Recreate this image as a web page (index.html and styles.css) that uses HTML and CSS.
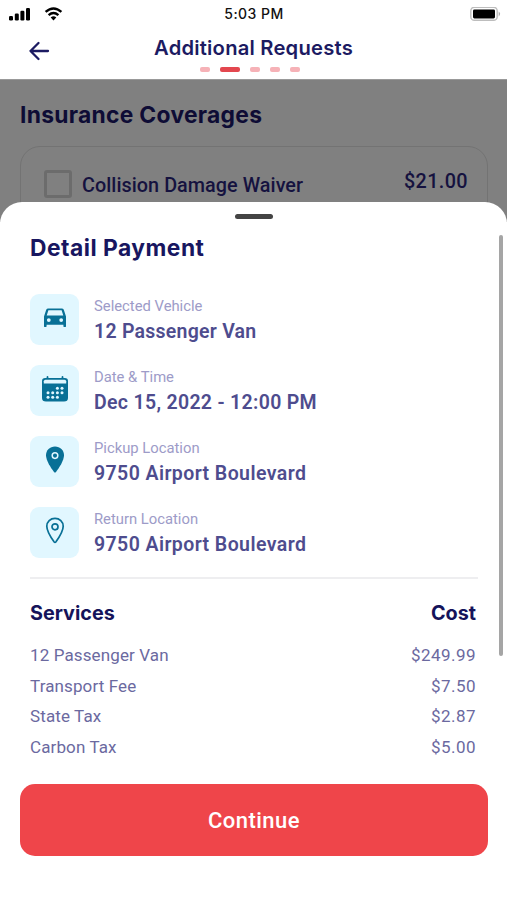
FILE: index.html
```html
<!DOCTYPE html>
<html lang="en">
<head>
<meta charset="utf-8">
<title>Additional Requests</title>
<link rel="stylesheet" href="styles.css">
</head>
<body>
<div class="screen">
  <div class="status">
    <div class="signals">
      <svg width="24" height="14" viewBox="0 0 24 14"><rect x="1" y="9" width="4" height="4.4" rx="1.2"/><rect x="6.8" y="6.6" width="4" height="6.8" rx="1.2"/><rect x="12.4" y="3.8" width="4" height="9.6" rx="1.2"/><rect x="18" y="1" width="4" height="12.4" rx="1.2"/></svg>
      <svg width="20" height="14" viewBox="0 0 20 14"><path d="M1.6 4.9Q9.5-2 17.4 4.9M4.6 8.2Q9.5 4 14.4 8.2" fill="none" stroke="#000" stroke-width="2.4"/><path d="M6.7 10.5Q9.5 8.2 12.3 10.5L9.5 13.4Z"/></svg>
    </div>
    <span class="clock">5:03 PM</span>
    <svg class="battery" width="31" height="15" viewBox="0 0 31 15"><rect x=".8" y=".3" width="26.4" height="13" rx="3.6" fill="#fff" stroke="#bdbdbd" stroke-width="1.4"/><rect x="3" y="2.4" width="22" height="9" rx="1.4"/><path d="M28.7 4.4Q31.5 6.8 28.7 9.4Z" fill="#aaa"/></svg>
  </div>
  <header class="header">
    <svg class="back" width="22" height="20" viewBox="0 0 22 20"><path d="M10.5 2 2.5 10l8 8M2.5 10H20" fill="none" stroke="#1c1b62" stroke-width="2.3" stroke-linecap="round" stroke-linejoin="round"/></svg>
    <div class="heading">
      <h1 class="title">Additional Requests</h1>
      <div class="steps"><i></i><i class="on"></i><i></i><i></i><i></i></div>
    </div>
  </header>
  <section class="behind">
    <h2 class="coverage-title">Insurance Coverages</h2>
    <div class="coverage">
      <span class="check"></span>
      <span class="coverage-name">Collision Damage Waiver</span>
      <span class="coverage-price">$21.00</span>
    </div>
  </section>
  <main class="sheet">
    <div class="handle"></div>
    <h2 class="sheet-title">Detail Payment</h2>
    <div class="details">
      <div class="detail">
        <span class="tile"><svg width="24" height="24" viewBox="0 0 24 24"><path fill-rule="evenodd" d="M5.2 2.4H18.8Q20.2 2.4 20.8 3.8L23 10.5V20.6Q23 21 22.5 21H21Q20.4 21 20.4 20.3V18.8H3.6V20.3Q3.6 21 3 21H1.5Q1 21 1 20.6V10.5L3.2 3.8Q3.8 2.4 5.2 2.4ZM5.4 4.2 3.7 9.6H20.3L18.6 4.2ZM5.8 12.2a1.9 1.9 0 1 0 0 3.8 1.9 1.9 0 0 0 0-3.8ZM18.2 12.2a1.9 1.9 0 1 0 0 3.8 1.9 1.9 0 0 0 0-3.8Z"/></svg></span>
        <div class="info"><span class="label">Selected Vehicle</span><span class="value v1">12 Passenger Van</span></div>
      </div>
      <div class="detail">
        <span class="tile"><svg width="28" height="28" viewBox="0 0 28 28"><path d="M4.2 3H23.8Q27 3 27 6V23Q27 26.6 23 26.6H5Q1 26.6 1 23V6Q1 3 4.2 3Z"/><path d="M6.5 2V4M21.5 2V4" stroke="#087096" stroke-width="1.8" stroke-linecap="round"/><path d="M2.8 8.4V6.3Q2.8 4.8 4.5 4.8H23.5Q25.2 4.8 25.2 6.3V8.4Z" fill="#e1f7ff"/><g fill="#e1f7ff"><circle cx="16.4" cy="13.2" r="1.5"/><circle cx="21" cy="13.2" r="1.5"/><circle cx="7" cy="17.8" r="1.5"/><circle cx="11.7" cy="17.8" r="1.5"/><circle cx="16.4" cy="17.8" r="1.5"/><circle cx="21" cy="17.8" r="1.5"/><circle cx="7" cy="22.3" r="1.5"/><circle cx="11.7" cy="22.3" r="1.5"/><circle cx="16.4" cy="22.3" r="1.5"/></g></svg></span>
        <div class="info"><span class="label">Date &amp; Time</span><span class="value v2">Dec 15, 2022 - 12:00 PM</span></div>
      </div>
      <div class="detail">
        <span class="tile"><svg width="20" height="28" viewBox="0 0 20 28"><path d="M10 .5C4.9.5 1 4.3 1 9.2 1 14.5 6 22 9 25.9Q10 27 11 25.9C14 22 19 14.5 19 9.2 19 4.3 15.1.5 10 .5Z"/><circle cx="10" cy="9.6" r="2.8" fill="none" stroke="#e1f7ff" stroke-width="1.5"/></svg></span>
        <div class="info"><span class="label">Pickup Location</span><span class="value v3">9750 Airport Boulevard</span></div>
      </div>
      <div class="detail">
        <span class="tile"><svg width="20" height="28" viewBox="0 0 20 28"><g fill="none" stroke="#087096" stroke-width="1.7"><path d="M10 1.3C5.4 1.3 1.8 4.7 1.8 9.2 1.8 14.5 6.5 21.2 9.2 25Q10 26 10.8 25C13.5 21.2 18.2 14.5 18.2 9.2 18.2 4.7 14.6 1.3 10 1.3Z"/><circle cx="10" cy="9.8" r="3"/></g></svg></span>
        <div class="info"><span class="label">Return Location</span><span class="value v3">9750 Airport Boulevard</span></div>
      </div>
    </div>
    <div class="costs">
      <div class="cost-head"><span>Services</span><span>Cost</span></div>
      <div class="cost"><span>12 Passenger Van</span><span class="price">$249.99</span></div>
      <div class="cost"><span>Transport Fee</span><span class="price">$7.50</span></div>
      <div class="cost"><span>State Tax</span><span class="price">$2.87</span></div>
      <div class="cost"><span>Carbon Tax</span><span class="price">$5.00</span></div>
    </div>
    <button class="continue">Continue</button>
    <div class="scrollbar"></div>
  </main>
</div>
</body>
</html>
```
FILE: styles.css
```css
* { box-sizing: border-box; }
body { margin: 0; background: #fff; font-family: Roboto, "Noto Sans", sans-serif; }
h1, h2 { margin: 0; }
svg { display: block; flex: none; }
.screen { width: 507px; height: 900px; overflow: hidden; display: flex; flex-direction: column; }
.status { height: 28px; flex: none; display: grid; grid-template-columns: 1fr auto 1fr; align-items: center; padding: 0 6px 0 8px; }
.signals { display: flex; gap: 12px; margin-top: -1px; }
.clock { font: 500 14px/28px Inter, sans-serif; color: #111; letter-spacing: .45px; margin-right: 1px; }
.battery { justify-self: end; }
.header { height: 51px; flex: none; display: grid; grid-template-columns: 50px 1fr 50px; }
.back { margin: 13px 0 0 28px; }
.heading { display: flex; flex-direction: column; align-items: center; }
.title { font: 600 20.2px/28px Inter, sans-serif; letter-spacing: .22px; margin-top: 6px; color: #1c1b62; white-space: nowrap; }
.steps { display: flex; gap: 10px; margin: 5px 0 0 -8px; }
.steps i { width: 10px; height: 5px; border-radius: 2px; background: #f6b2b7; }
.steps i.on { width: 20px; background: #e3474f; }
.behind { height: 143px; flex: none; background: #808080; padding: 19px 19px 0 20px; border-top: 1px solid #999; }
.coverage-title { font: 700 22.8px/32px Inter, sans-serif; letter-spacing: .3px; color: #0e0c35; white-space: nowrap; }
.coverage { margin-top: 15px; height: 110px; border: 1px solid #737373; border-radius: 20px; display: flex; align-items: flex-start; padding: 23px 20px 0 23px; color: #15123f; font-size: 19.8px; font-weight: 500; line-height: 24px; }
.check { width: 28px; height: 28px; border: 3px solid #6c6c6c; border-radius: 3px; margin-right: 10px; }
.coverage-name { margin-top: 4px; letter-spacing: .05px; }
.coverage-price { margin-left: auto; letter-spacing: .4px; margin-right: -1px; }
.sheet { position: relative; height: 698px; margin-top: -20px; padding: 12px 20px 0; flex: none; background: #fff; border-radius: 22px 22px 0 0; }
.handle { width: 38px; height: 5px; border-radius: 3px; background: #444; margin: 0 auto; }
.sheet-title { margin: 13px 0 0 10px; font: 700 22.8px/32px Inter, sans-serif; letter-spacing: .5px; color: #181660; white-space: nowrap; }
.details { margin: 30px 9px 0 10px; padding-bottom: 19px; border-bottom: 2px solid #eeeef0; display: flex; flex-direction: column; gap: 20px; }
.detail { display: flex; height: 51px; gap: 15px; }
.tile { width: 49px; height: 51px; border-radius: 9px; background: #e1f7ff; display: flex; justify-content: center; align-items: center; padding-bottom: 4px; fill: #087096; }
.info { display: flex; flex-direction: column; white-space: nowrap; }
.label { font-size: 14.8px; line-height: 20px; margin-top: 2px; color: #9d9bc8; }
.value { font-size: 19.5px; line-height: 26px; margin-top: 3px; font-weight: 600; color: #4e4c8e; }
.v1 { letter-spacing: .25px; }
.v2 { letter-spacing: .32px; }
.v3 { letter-spacing: .42px; }
.costs { margin: 18px 11px 0 10px; color: #6b699f; font-size: 17px; line-height: 30.6px; }
.cost-head { display: flex; justify-content: space-between; font: 700 19.8px/32px Inter, sans-serif; color: #15135a; margin-bottom: 11px; }
.cost { display: flex; justify-content: space-between; letter-spacing: .12px; }
.price { letter-spacing: .45px; }
.continue { display: block; width: 468px; height: 72px; margin-top: 22px; border: 0; border-radius: 15px; background: #ef454a; color: #fff; font: 500 22px/72px Roboto, sans-serif; letter-spacing: .45px; padding: 1px 0 0; }
.scrollbar { position: absolute; right: 4px; top: 33px; width: 4px; height: 421px; border-radius: 2px; background: #a5a5a5; }
```
